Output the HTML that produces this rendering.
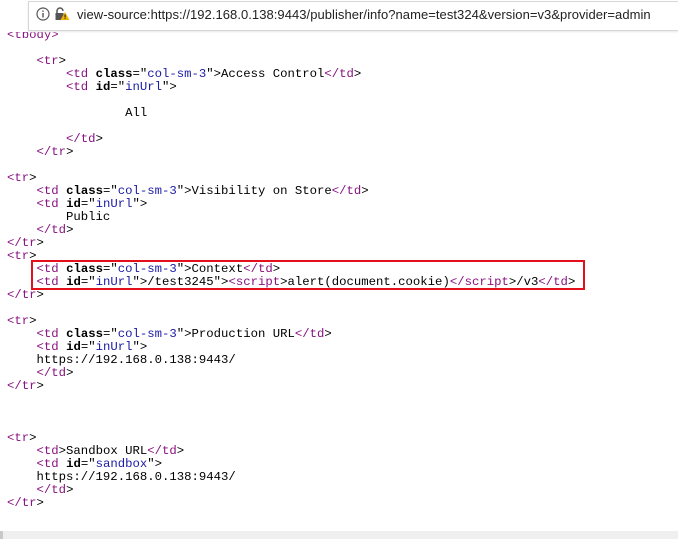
<!DOCTYPE html>
<html><head><meta charset="utf-8"><style>
html,body{margin:0;padding:0;width:678px;height:539px;overflow:hidden;background:#fff;position:relative}
.bar{position:absolute;left:0;top:0;width:678px;height:32px;background:#fff;z-index:2}
.addr{position:absolute;left:28px;top:1px;width:660px;height:28px;border:1px solid #d6d6d6;border-right:none;background:#fff;box-shadow:0 1px 2px #e8e8e8}
.url{position:absolute;left:77px;top:7px;font:13px "Liberation Sans",sans-serif;color:#222;white-space:nowrap;letter-spacing:0.05px}
pre{position:absolute;left:7px;top:29px;margin:0;font:12.3px/13px "Liberation Mono",monospace;color:#000}
.t{color:#881280}.a{color:#000;font-weight:bold}.v{color:#1a1aa6}
.box{position:absolute;left:31px;top:260px;width:550px;height:26px;border:2px solid #e3101c}
.foot{position:absolute;left:0;top:531px;width:678px;height:8px;background:#efefef;border-left:3px solid #c8c8c8}
</style></head><body>
<div class="bar"><div class="addr"></div>
<svg style="position:absolute;left:36px;top:7px" width="14" height="14" viewBox="0 0 14 14"><circle cx="7" cy="7" r="6" fill="none" stroke="#555" stroke-width="1.2"/><rect x="6.3" y="6" width="1.4" height="4.5" fill="#555"/><rect x="6.3" y="3.5" width="1.4" height="1.4" fill="#555"/></svg>
<svg style="position:absolute;left:54px;top:6px" width="16" height="16" viewBox="0 0 16 16"><path d="M3 7V5a3 3 0 0 1 6 0" fill="none" stroke="#555" stroke-width="1.5"/><rect x="1.5" y="7" width="8" height="7" fill="#555"/><path d="M11 6l4.5 8h-9z" fill="#f0b400"/><rect x="10.6" y="8.5" width="0.9" height="3" fill="#000"/><rect x="10.6" y="12.2" width="0.9" height="0.9" fill="#000"/></svg>
<div class="url">view-source:https://192.168.0.138:9443/publisher/info?name=test324&amp;version=v3&amp;provider=admin</div></div>
<pre><span class="t">&lt;tbody&gt;</span>

    <span class="t">&lt;tr</span>&gt;
        <span class="t">&lt;td</span> <span class="a">class</span>="<span class="v">col-sm-3</span>"&gt;Access Control<span class="t">&lt;/td</span>&gt;
        <span class="t">&lt;td</span> <span class="a">id</span>="<span class="v">inUrl</span>"&gt;

                All

        <span class="t">&lt;/td</span>&gt;
    <span class="t">&lt;/tr</span>&gt;

<span class="t">&lt;tr</span>&gt;
    <span class="t">&lt;td</span> <span class="a">class</span>="<span class="v">col-sm-3</span>"&gt;Visibility on Store<span class="t">&lt;/td</span>&gt;
    <span class="t">&lt;td</span> <span class="a">id</span>="<span class="v">inUrl</span>"&gt;
        Public
    <span class="t">&lt;/td</span>&gt;
<span class="t">&lt;/tr</span>&gt;
<span class="t">&lt;tr</span>&gt;
    <span class="t">&lt;td</span> <span class="a">class</span>="<span class="v">col-sm-3</span>"&gt;Context<span class="t">&lt;/td</span>&gt;
    <span class="t">&lt;td</span> <span class="a">id</span>="<span class="v">inUrl</span>"&gt;/test3245"&gt;<span class="t">&lt;script</span>&gt;alert(document.cookie)<span class="t">&lt;/script</span>&gt;/v3<span class="t">&lt;/td</span>&gt;
<span class="t">&lt;/tr</span>&gt;

<span class="t">&lt;tr</span>&gt;
    <span class="t">&lt;td</span> <span class="a">class</span>="<span class="v">col-sm-3</span>"&gt;Production URL<span class="t">&lt;/td</span>&gt;
    <span class="t">&lt;td</span> <span class="a">id</span>="<span class="v">inUrl</span>"&gt;
    https://192.168.0.138:9443/
    <span class="t">&lt;/td</span>&gt;
<span class="t">&lt;/tr</span>&gt;



<span class="t">&lt;tr</span>&gt;
    <span class="t">&lt;td</span>&gt;Sandbox URL<span class="t">&lt;/td</span>&gt;
    <span class="t">&lt;td</span> <span class="a">id</span>="<span class="v">sandbox</span>"&gt;
    https://192.168.0.138:9443/
    <span class="t">&lt;/td</span>&gt;
<span class="t">&lt;/tr</span>&gt;</pre>
<div class="box"></div>
<div class="foot"></div>
</body></html>
